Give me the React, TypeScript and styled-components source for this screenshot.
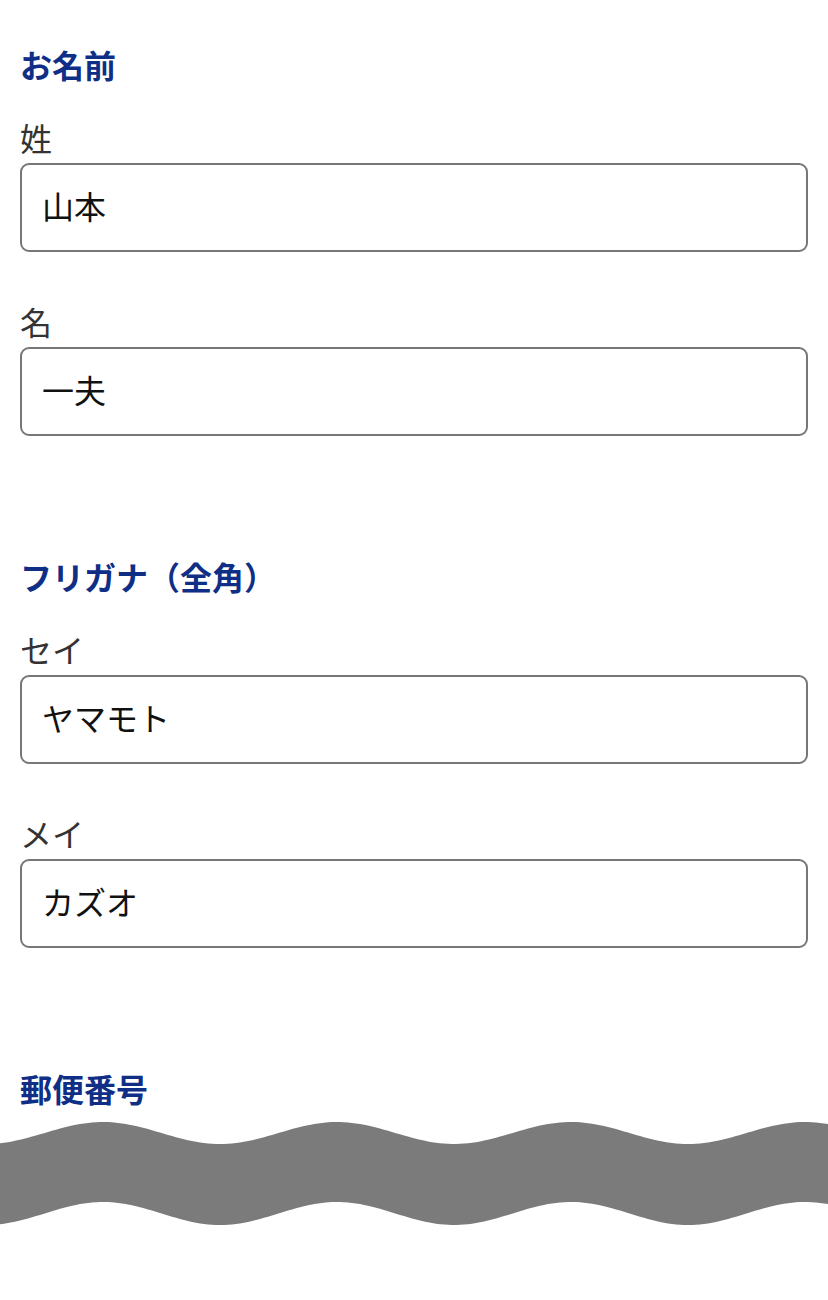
import React, { ReactElement } from 'react';
import styled, { createGlobalStyle } from 'styled-components';

const GlobalStyle = createGlobalStyle`
  html, body {
    margin: 0;
    padding: 0;
    background: #ffffff;
  }

  body {
    font-family: "Noto Sans CJK JP", "Noto Sans", sans-serif;
  }
`;

const Page = styled.div`
  display: flex;
  flex-direction: column;
  gap: 116px;

  padding: 40px 20px 0;
`;

const Section = styled.section`
  display: flex;
  flex-direction: column;
`;

const SectionTitle = styled.h2<{ $last?: boolean }>`
  margin: 0 0 ${({ $last }) => ($last ? '0' : '29px')};

  font-size: 32px;
  font-weight: 700;
  line-height: 48px;
  color: #0f2e86;
`;

const Fields = styled.div`
  display: flex;
  flex-direction: column;
  gap: 49px;
`;

const Field = styled.label`
  display: flex;
  flex-direction: column;
`;

const FieldLabel = styled.span`
  margin-bottom: 6px;

  font-size: 32px;
  line-height: 40px;
  color: #333333;
`;

const TextInput = styled.input`
  box-sizing: border-box;
  width: 100%;
  height: 89px;
  padding: 0 20px 6px;

  border: 2px solid #777777;
  border-radius: 9px;
  background: #ffffff;

  font-family: "Noto Sans CJK JP", "Noto Sans", sans-serif;
  font-size: 32px;
  color: #111111;
  outline: none;
`;

const WaveWrap = styled.div`
  margin: 0 -20px;
  height: 130px;

  svg {
    display: block;
  }
`;

type FieldType = {
  label: string;
  value: string;
};

type SectionType = {
  title: string;
  fields: FieldType[];
};

const sections: SectionType[] = [
  {
    title: 'お名前',
    fields: [
      { label: '姓', value: '山本' },
      { label: '名', value: '一夫' },
    ],
  },
  {
    title: 'フリガナ（全角）',
    fields: [
      { label: 'セイ', value: 'ヤマモト' },
      { label: 'メイ', value: 'カズオ' },
    ],
  },
];

// cut edge of the screenshot, drawn as a wavy band
const wavePath = (): string => {
  const width = 828;
  const period = 234;
  const crest = 103;
  const top: string[] = [];
  const bottom: string[] = [];
  for (let x = 0; x <= width; x += 4) {
    const c = Math.cos((2 * Math.PI * (x - crest)) / period);
    top.push(`${x},${(21 - 11 * c).toFixed(2)}`);
    bottom.push(`${x},${(101.5 - 11.5 * c).toFixed(2)}`);
  }
  return `M${top.join(' L')} L${bottom.reverse().join(' L')} Z`;
};

const Wave = (): ReactElement => (
  <WaveWrap>
    <svg width="828" height="130" viewBox="0 0 828 130">
      <path d={wavePath()} fill="#7b7b7b" />
    </svg>
  </WaveWrap>
);

const App = (): ReactElement => (
  <>
    <GlobalStyle />
    <Page>
      {sections.map((section) => (
        <Section key={section.title}>
          <SectionTitle>{section.title}</SectionTitle>
          <Fields>
            {section.fields.map((field) => (
              <Field key={field.label}>
                <FieldLabel>{field.label}</FieldLabel>
                <TextInput type="text" defaultValue={field.value} readOnly />
              </Field>
            ))}
          </Fields>
        </Section>
      ))}
      <Section>
        <SectionTitle $last>郵便番号</SectionTitle>
        <Wave />
      </Section>
    </Page>
  </>
);

export default App;
